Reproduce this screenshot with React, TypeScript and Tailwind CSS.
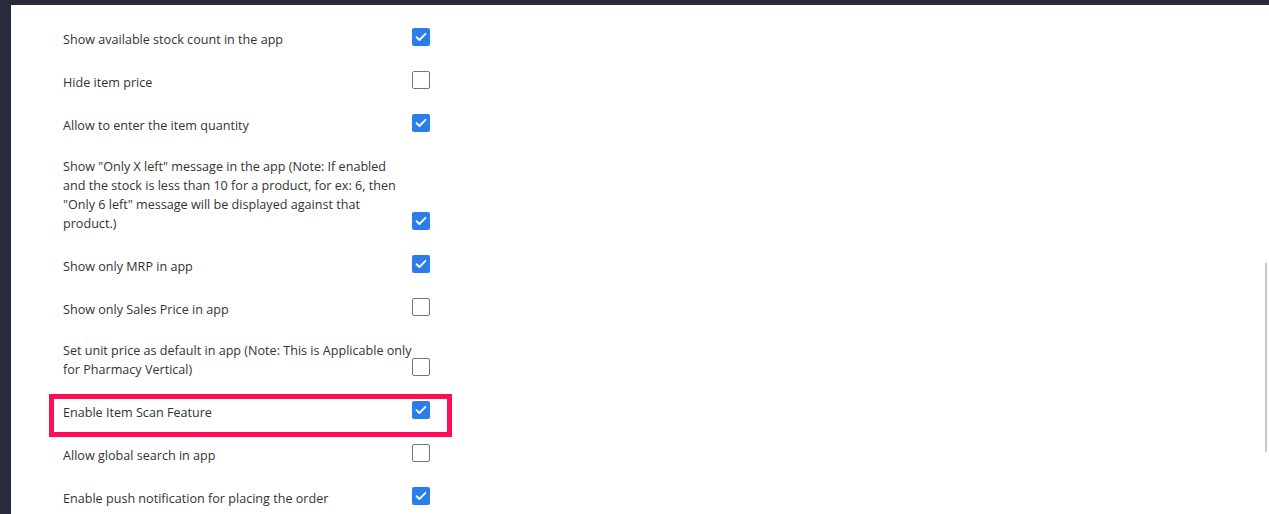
import React from "react";

type Row = { lines: string[]; checked: boolean; highlight?: boolean };

const rows: Row[] = [
  { lines: ["Show available stock count in the app"], checked: true },
  { lines: ["Hide item price"], checked: false },
  { lines: ["Allow to enter the item quantity"], checked: true },
  {
    lines: [
      'Show "Only X left" message in the app (Note: If enabled',
      "and the stock is less than 10 for a product, for ex: 6, then",
      '"Only 6 left" message will be displayed against that',
      "product.)",
    ],
    checked: true,
  },
  { lines: ["Show only MRP in app"], checked: true },
  { lines: ["Show only Sales Price in app"], checked: false },
  {
    lines: [
      "Set unit price as default in app (Note: This is Applicable only",
      "for Pharmacy Vertical)",
    ],
    checked: false,
  },
  { lines: ["Enable Item Scan Feature"], checked: true, highlight: true },
  { lines: ["Allow global search in app"], checked: false },
  { lines: ["Enable push notification for placing the order"], checked: true },
];

function Checkbox({ checked }: { checked: boolean }) {
  if (checked) {
    return (
      <div className="w-[18px] h-[18px] rounded-[2px] bg-[#2b7de9] flex items-center justify-center shrink-0">
        <svg width="12" height="10" viewBox="0 0 12 10" fill="none">
          <path
            d="M1.5 5.2 L4.4 8 L10.5 1.8"
            stroke="#ffffff"
            strokeWidth="1.8"
            strokeLinecap="round"
            strokeLinejoin="round"
          />
        </svg>
      </div>
    );
  }
  return (
    <div className="w-[18px] h-[18px] rounded-[2px] border-[1.5px] border-[#767676] bg-white shrink-0" />
  );
}

export default function App() {
  return (
    <div
      className="w-[1269px] h-[514px] overflow-hidden bg-[#272b3b] flex flex-col"
      style={{ fontFamily: '"Open Sans", "Noto Sans", sans-serif' }}
    >
      <div className="h-[5px] shrink-0" />
      <div className="flex flex-1 min-h-0">
        <div className="w-[11px] shrink-0" />
        <div className="flex-1 bg-white relative pl-[52px] pt-[12px]">
          {rows.map((r, i) => (
            <div key={i} className="relative flex items-end py-[11px]">
              {r.highlight && (
                <div className="absolute left-[-14px] top-[4px] w-[403px] h-[43px] border-[5px] border-[#ff0d55] pointer-events-none" />
              )}
              <div className="w-[349px] text-[12.6px] leading-[19px] text-[#333333]">
                {r.lines.map((l, j) => (
                  <div key={j} className="whitespace-nowrap">
                    {l}
                  </div>
                ))}
              </div>
              <div className="h-[21px] flex items-end pb-[3px]">
                <Checkbox checked={r.checked} />
              </div>
            </div>
          ))}
          <div className="absolute right-[2px] top-[258px] w-[2px] h-[189px] bg-[#c8c8c8]" />
        </div>
      </div>
    </div>
  );
}
